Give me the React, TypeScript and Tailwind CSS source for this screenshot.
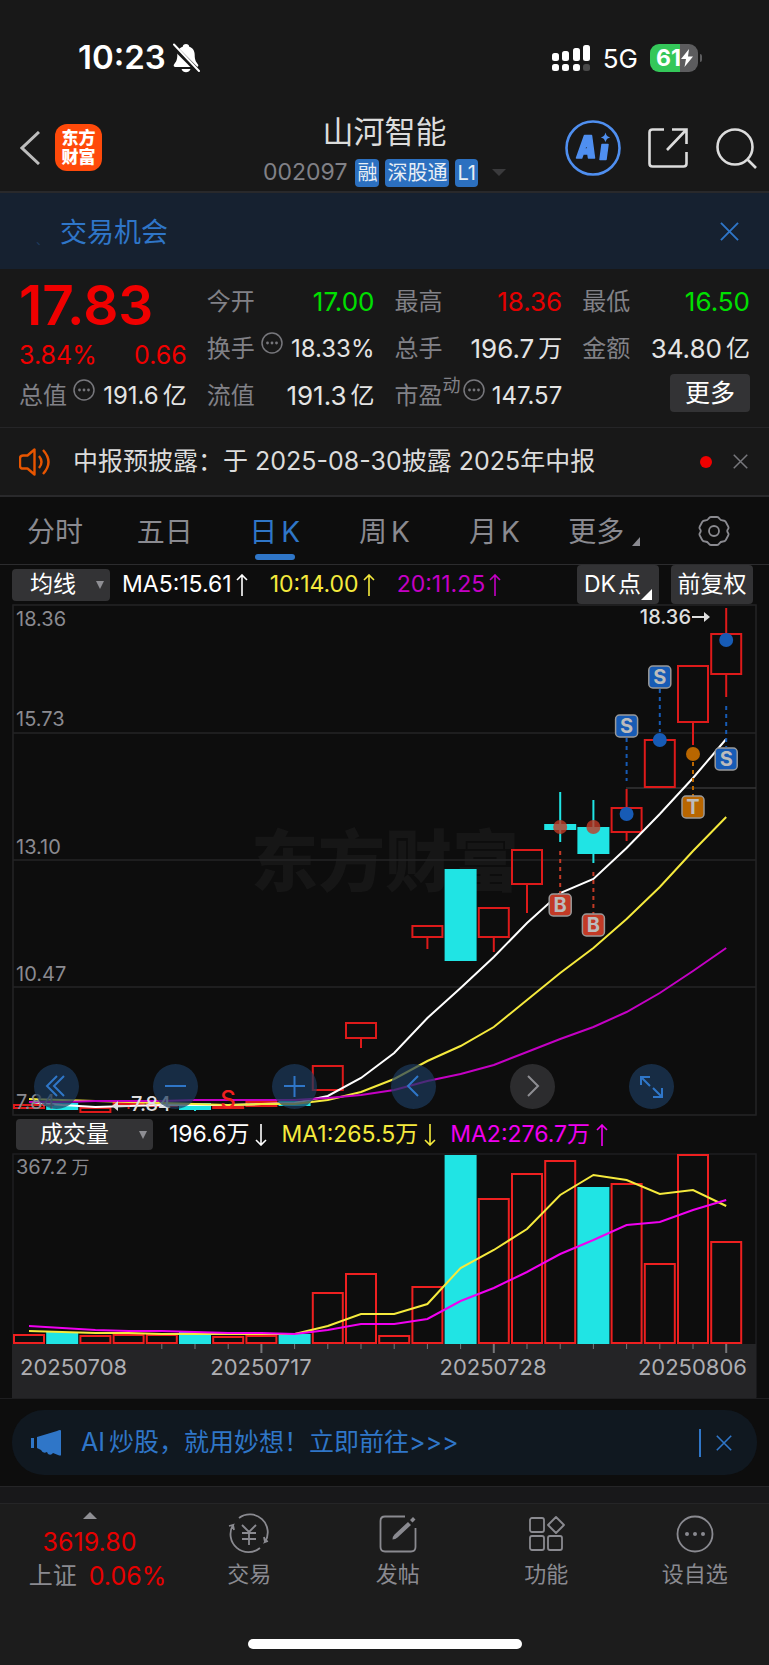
import React from "react";

const START_X = 17;
const STEP = 33.2;

const xAt = (i: number) => START_X + STEP * i;

// y holds high, top, bottom and low in chart units, measured down from the top edge
type Candle = { up: boolean; y: [number, number, number, number] };

const candles: Candle[] = [
  { up: true, y: [501, 501, 504, 504] },
  { up: false, y: [499, 500, 505, 506] },
  { up: true, y: [504, 504, 508, 508] },
  { up: true, y: [498, 499, 501, 505] },
  { up: true, y: [500, 500, 502, 502] },
  { up: false, y: [499, 500, 505, 507] },
  { up: true, y: [503, 503, 504, 504] },
  { up: true, y: [498, 498, 502, 502] },
  { up: false, y: [498, 498, 501, 501] },
  { up: true, y: [462, 462, 486, 487] },
  { up: true, y: [419, 419, 434, 444] },
  { up: true, y: [372, 372, 372, 372] },
  { up: true, y: [322, 322, 333, 345] },
  { up: false, y: [265, 266, 356, 357] },
  { up: true, y: [304, 304, 333, 348] },
  { up: true, y: [246, 246, 280, 309] },
  { up: false, y: [188, 221, 225, 238] },
  { up: false, y: [196, 224, 249, 259] },
  { up: true, y: [185, 204, 228, 237] },
  { up: true, y: [136, 136, 183, 183] },
  { up: true, y: [62, 62, 118, 141] },
  { up: true, y: [4, 30, 70, 93] },
];

const ma5 = [498, 501, 503, 502, 501, 501, 501, 500, 499, 492, 474, 449, 414, 384, 353, 319, 289, 275, 244, 210, 174, 135];
const ma10 = [495, 496, 497, 498, 499, 500, 501, 500, 500, 496, 488, 475, 457, 442, 423, 396, 369, 344, 315, 283, 247, 213];
const ma20 = [498, 498, 497, 497, 497, 496, 496, 496, 496, 494, 491, 486, 477, 470, 461, 448, 435, 423, 408, 389, 367, 344];

const volumeTops = [182, 180, 183, 182, 182, 180, 184, 183, 182, 140, 121, 183, 134, 3, 46, 21, 8, 35, 31, 111, 2, 89];
const volumeMa1 = [178, 179, 180, 180, 181, 181, 181, 181, 181, 173, 161, 161, 151, 115, 97, 76, 42, 22, 27, 41, 37, 53];
const volumeMa2 = [173, 175, 177, 178, 178, 179, 180, 180, 181, 177, 171, 171, 166, 148, 135, 119, 101, 87, 72, 69, 57, 47];
const fallingVolume = [1, 5, 8, 13, 17];

type Marker = { index: number; label: string; color: string; badge: number; dot: number; dash: [number, number] };

const markers: Marker[] = [
  { index: 16, label: "B", color: "#c23a26", badge: 301, dot: 223, dash: [247, 290] },
  { index: 17, label: "B", color: "#c23a26", badge: 321, dot: 223, dash: [268, 310] },
  { index: 18, label: "S", color: "#175bb5", badge: 122, dot: 210, dash: [134, 177] },
  { index: 19, label: "S", color: "#175bb5", badge: 73, dot: 136, dash: [85, 128] },
  { index: 20, label: "T", color: "#b96600", badge: 203, dot: 150, dash: [150, 192] },
  { index: 21, label: "S", color: "#175bb5", badge: 155, dot: 36, dash: [102, 143] },
];

const toPoints = (values: number[]) => values.map((y, i) => `${xAt(i)},${y}`).join(" ");

const Dots: React.FC = () => (
  <svg viewBox="0 0 22 22" className="h-[22px] w-[22px] shrink-0" fill="none" stroke="#77777c" strokeWidth="1.5" aria-hidden="true">
    <circle cx="11" cy="11" r="10" />
    <g fill="#77777c" stroke="none">
      <circle cx="6.5" cy="11" r="1.4" />
      <circle cx="11" cy="11" r="1.4" />
      <circle cx="15.5" cy="11" r="1.4" />
    </g>
  </svg>
);

const Cross: React.FC<{ className: string }> = ({ className }) => (
  <svg viewBox="0 0 20 20" className={className} fill="none" stroke="currentColor" strokeWidth="2" aria-hidden="true">
    <path d="M1 1 19 19M19 1 1 19" />
  </svg>
);

const StatusBar: React.FC = () => (
  <div className="flex h-[116px] items-center justify-between pr-[67px] pl-[78px]">
    <div className="flex items-center gap-1.5 text-[33px] font-semibold text-white">
      <span>10:23</span>
      <svg viewBox="0 0 28 30" className="h-[30px] w-7" aria-hidden="true">
        <path d="M14 1c-2 0-3 1-3.300 2.800C7 5 5.300 8 5.300 12c0 5-1.300 7-3.300 9.400-.8 1 0 2.600 1.300 2.600h21.400c1.300 0 2.100-1.600 1.300-2.600-2-2.400-3.300-4.400-3.300-9.400 0-4-1.700-7-5.400-8.200C17 2 16 1 14 1Z" fill="#fff" />
        <path d="M9.500 26h9c-.8 2.400-2.500 3.300-4.500 3.300S10.300 28.400 9.500 26Z" fill="#fff" />
        <path d="m1 3 26 26" stroke="#181818" strokeWidth="5" />
        <path d="m2 1.500 25 26.500" stroke="#fff" strokeWidth="2" strokeLinecap="round" />
      </svg>
    </div>
    <div className="flex items-center">
      <svg viewBox="0 0 40 28" className="h-7 w-10" fill="#fff" aria-hidden="true">
        <rect x="1" y="9" width="7" height="8" rx="2.500" />
        <rect x="11" y="7" width="7" height="10" rx="2.500" />
        <rect x="22" y="4" width="7" height="13" rx="2.500" />
        <rect x="32" y="1" width="7" height="16" rx="2.500" />
        <rect x="1" y="20" width="7" height="7" rx="2.500" />
        <rect x="11" y="20" width="7" height="7" rx="2.500" />
        <rect x="22" y="20" width="7" height="7" rx="2.500" />
        <rect x="32" y="20" width="7" height="7" rx="2.500" fill="#4a4a4a" />
      </svg>
      <span className="ml-3 text-[26px] text-white">5G</span>
      <div className="ml-3 flex h-7 w-12 items-center rounded-[9px] bg-[linear-gradient(to_right,#34c759_62%,#5c5c5e_62%)] pl-1.5 text-[23px] font-bold text-white">
        61
        <svg viewBox="0 0 12 18" className="h-[18px] w-3" fill="#fff" aria-hidden="true">
          <path d="M8 0 0 10h5L3.500 18 12 7.500H7Z" />
        </svg>
      </div>
      <div className="ml-0.5 h-2 w-0.5 rounded-r-full bg-[#5c5c5e]" />
    </div>
  </div>
);

const Header: React.FC = () => (
  <header className="grid h-[77px] grid-cols-[1fr_auto_1fr] items-center border-b-2 border-[#29292b]">
    <div className="flex items-center gap-[15px] pb-3 pl-5">
      <button aria-label="返回" className="text-[#bcbcbc]">
        <svg viewBox="0 0 20 34" className="h-[34px] w-5" fill="none" stroke="currentColor" strokeWidth="3">
          <path d="M19 1 2 17l17 16" />
        </svg>
      </button>
      <div className="flex h-[47px] w-[47px] items-center justify-center rounded-xl bg-[#ff4a0a] text-center text-[17px] leading-[19px] font-black text-white">
        东方<br />财富
      </div>
    </div>
    <div className="flex flex-col items-center">
      <h1 className="mb-2 text-[31px] leading-[30px] text-[#dcdcdc]">山河智能</h1>
      <div className="flex h-[36px] items-center gap-1.5 text-[23px]">
        <span className="text-[#818187]">002097</span>
        <span className="ml-0.5 rounded bg-[#2c70c0] px-0.5 text-[20px] leading-7 text-[#e8eef5]">融</span>
        <span className="rounded bg-[#2c70c0] px-0.5 text-[20px] leading-7 text-[#e8eef5]">深股通</span>
        <span className="rounded bg-[#2c70c0] px-0.5 text-[20px] leading-7 text-[#e8eef5]">L1</span>
        <button aria-label="切换" className="ml-2">
          <svg viewBox="0 0 14 7" className="h-[7px] w-3.5" fill="#3a3a3c"><path d="M0 0h14L7 7Z" /></svg>
        </button>
      </div>
    </div>
    <div className="flex items-center justify-end gap-[26px] pr-3 pb-3">
      <button aria-label="AI">
        <svg viewBox="0 0 56 56" className="h-14 w-14">
          <circle cx="28" cy="28" r="26.500" fill="none" stroke="#4f8ff0" strokeWidth="2.600" />
          <g fill="#4f8ff0" stroke="#4f8ff0" strokeWidth="1.500" strokeLinejoin="round">
            <path d="M11.500 38 19.500 15.500h7l3 22.500h-6l-.6-4h-4.800l-1.400 4Zm8-9h3l-.6-5.500Z" fillRule="evenodd" />
            <path d="M37 24.500h6l-2 15h-6Z" />
          </g>
          <path d="M40.500 12.500c.9 3.200 1.700 4 4.700 4.900-3 .9-3.800 1.700-4.700 4.900-.9-3.200-1.700-4-4.700-4.900 3-.9 3.800-1.700 4.700-4.900Z" fill="#4f8ff0" />
        </svg>
      </button>
      <button aria-label="分享" className="text-[#dcdcdc]">
        <svg viewBox="0 0 42 42" className="h-[42px] w-[42px]" fill="none" stroke="currentColor" strokeWidth="2.600">
          <path d="M17 2.500H5.500q-3 0-3 3v31q0 3 3 3h31q3 0 3-3V25M25 2.500h14.500V17M39.500 2.500 20 23" />
        </svg>
      </button>
      <button aria-label="搜索" className="text-[#dcdcdc]">
        <svg viewBox="0 0 42 42" className="h-[42px] w-[42px]" fill="none" stroke="currentColor" strokeWidth="2.600">
          <circle cx="20" cy="20" r="17.500" />
          <path d="m32 32 9 9" />
        </svg>
      </button>
    </div>
  </header>
);

type StatProps = { label: string; value: string; unit?: string; color?: string; info?: boolean; sup?: string };

const Stat: React.FC<StatProps> = ({ label, value, unit, color = "text-[#e4e4e4]", info, sup }) => (
  <div className="flex h-[47px] items-center justify-between">
    <dt className="flex items-center text-2xl whitespace-nowrap text-[#818187]">
      {label}
      {sup && <sup className="top-[-10px] text-[18px]">{sup}</sup>}
      {info && <span className={sup ? "-mt-3 ml-0.5" : "-mt-3 ml-1.5"}><Dots /></span>}
    </dt>
    <dd className={`flex items-center gap-1 whitespace-nowrap ${color} ${info ? "text-2xl" : "text-[26px]"}`}>
      {value}
      {unit && <span className="text-2xl">{unit}</span>}
    </dd>
  </div>
);

const Quote: React.FC = () => (
  <section className="border-b border-[#252527] px-[19px] pt-[9px] pb-2">
    <dl className="grid grid-cols-4 gap-x-5">
      <div className="row-span-2 flex flex-col text-[#f00000]">
        <dd className="text-[55px] leading-[54px] font-semibold">17.83</dd>
        <dd className="flex h-[40px] items-end justify-between text-[25px] leading-[34px]">
          <span>3.84%</span>
          <span>0.66</span>
        </dd>
      </div>
      <Stat label="今开" value="17.00" color="text-[#00e000]" />
      <Stat label="最高" value="18.36" color="text-[#e60000]" />
      <Stat label="最低" value="16.50" color="text-[#00e000]" />
      <Stat label="换手" value="18.33%" info />
      <Stat label="总手" value="196.7" unit="万" />
      <Stat label="金额" value="34.80" unit="亿" />
      <Stat label="总值" value="191.6" unit="亿" info />
      <Stat label="流值" value="191.3" unit="亿" />
      <Stat label="市盈" value="147.57" sup="动" info />
      <div className="flex items-start justify-end pt-0.5">
        <button className="h-[38px] w-20 rounded bg-[#333335] text-[25px] leading-[38px] text-white">更多</button>
      </div>
    </dl>
  </section>
);

const News: React.FC = () => (
  <section className="flex h-[69px] items-center border-b-2 border-[#29292b] pr-[21px] pl-[19px]">
    <svg viewBox="0 0 34 28" className="h-7 w-[34px]" fill="none" stroke="#e85500" strokeWidth="2.400" aria-hidden="true">
      <path d="M15.500 1.500v25l-7-6H4q-3 0-3-3v-7q0-3 3-3h4.500Z" strokeLinejoin="round" />
      <path d="M20 8q5 6 0 12M24 2q11 12 0 24" />
    </svg>
    <a href="#news" className="ml-5 flex-1 text-[25px] whitespace-nowrap text-[#dcdcdc]">中报预披露：于 2025-08-30披露 2025年中报</a>
    <span className="h-3 w-3 rounded-full bg-[#f00000]" />
    <button aria-label="关闭" className="ml-[21px] text-[#77777c]"><Cross className="h-[15px] w-[15px]" /></button>
  </section>
);

const tabs = [
  { name: "分时" },
  { name: "五日" },
  { name: "日", suffix: "K", active: true },
  { name: "周", suffix: "K" },
  { name: "月", suffix: "K" },
];

const Tabs: React.FC = () => (
  <nav className="grid h-[68px] grid-cols-7 border-b border-[#2c2c2e] bg-[#0d0d0d] text-[28px] text-[#8a8a90]">
    {tabs.map(({ name, suffix, active }) => (
      <button key={name} className={`relative flex items-center justify-center gap-1 pt-0.5 ${active ? "text-[#2f76c8]" : ""}`}>
        {name}
        {suffix && <span>{suffix}</span>}
        {active && <span className="absolute bottom-1 left-1/2 h-1.5 w-10 -translate-x-1/2 rounded-full bg-[#2f76c8]" />}
      </button>
    ))}
    <button className="flex items-center justify-center gap-2 pt-0.5">
      更多
      <svg viewBox="0 0 8 9" className="mt-5 h-[9px] w-2" fill="#8a8a90" aria-hidden="true"><path d="M8 0v9H0Z" /></svg>
    </button>
    <button aria-label="设置" className="flex items-center justify-center">
      <svg viewBox="0 0 32 32" className="h-8 w-8" fill="none" stroke="currentColor" strokeWidth="1.800">
        <path
          d="M13 2h6q1.500 0 2.300 1.500Q22.500 5.500 25 5.500q2 0 2.800 1.500l2.400 4.500q.8 1.500-.2 2.700-1.500 1.800 0 3.600 1 1.200.2 2.700L27.800 25q-.8 1.500-2.800 1.500-2.500 0-3.700 2Q20.500 30 19 30h-6q-1.500 0-2.300-1.500-1.200-2-3.700-2-2 0-2.800-1.500l-2.400-4.500q-.8-1.500.2-2.700 1.500-1.800 0-3.600-1-1.200-.2-2.700L4.200 7Q5 5.500 7 5.500q2.500 0 3.700-2Q11.500 2 13 2Z"
          strokeLinejoin="round"
        />
        <circle cx="16" cy="16" r="5" />
      </svg>
    </button>
  </nav>
);

const Caret: React.FC = () => (
  <svg viewBox="0 0 8 8" className="h-2 w-2" fill="#8e8e93" aria-hidden="true"><path d="M0 0h8L4 8Z" /></svg>
);

const Arrow: React.FC<{ down?: boolean }> = ({ down }) => (
  <svg viewBox="0 0 12 22" className={down ? "h-[22px] w-3 rotate-180" : "h-[22px] w-3"} fill="none" stroke="currentColor" strokeWidth="1.600" aria-hidden="true">
    <path d="M6 22V1M1 6l5-5 5 5" />
  </svg>
);

const PriceChart: React.FC = () => (
  <div className="relative">
    <svg viewBox="0 0 745 512" className="block w-full" aria-label="日K线图">
      <text x="373" y="282" textAnchor="middle" fontSize="67" fontWeight="900" fill="#161616">东方财富</text>
      <g fill="none" stroke="#242426" strokeWidth="1.500">
        <rect x="1" y="1" width="743" height="510" />
        <path d="M1 129h743M1 256h743M1 383h743" />
        <path d="M614 184h130" stroke="#343436" />
      </g>
      <g fill="#8a8a90" fontSize="20">
        <text x="4" y="22">18.36</text>
        <text x="4" y="122">15.73</text>
        <text x="4" y="250">13.10</text>
        <text x="4" y="377">10.47</text>
      </g>
      {candles.map(({ up, y: [high, top, bottom, low] }, i) => {
        const color = up ? "#dd1a1a" : "#20e4e4";
        return (
          <g key={i} stroke={color} strokeWidth="2" fill={up ? "none" : color}>
            <path d={`M${xAt(i)} ${high}V${top}M${xAt(i)} ${bottom}V${low}`} />
            <rect x={xAt(i) - 15} y={top} width="30" height={bottom - top} />
          </g>
        );
      })}
      <g fill="none" strokeWidth="2">
        <polyline points={toPoints(ma5)} stroke="#ffffff" />
        <polyline points={toPoints(ma10)} stroke="#f5ea3d" />
        <polyline points={toPoints(ma20)} stroke="#c400c4" />
      </g>
      {markers.map(({ index, label, color, badge, dot, dash }) => (
        <g key={index}>
          <path d={`M${xAt(index)} ${dash[0]}V${dash[1]}`} stroke={color} strokeWidth="2" strokeDasharray="4 4" />
          <circle cx={xAt(index)} cy={dot} r="7" fill={color} fillOpacity={label === "B" ? 0.8 : 1} />
          <rect x={xAt(index) - 11} y={badge - 11} width="22" height="22" rx="4" fill={color} stroke="#999999" strokeWidth="1.500" />
          <text x={xAt(index)} y={badge + 7} textAnchor="middle" fontSize="20" fontWeight="700" fill="#bcbcbc">{label}</text>
        </g>
      ))}
      <text x="4" y="505" fill="#8a8a90" fontSize="20">7.84</text>
      <g fill="#dedede" fontSize="20" fontWeight="500">
        <text x="679" y="20" textAnchor="end">18.36</text>
        <path d="M680 13h12" stroke="#dedede" strokeWidth="2" />
        <path d="m692 8 6 5-6 5Z" />
        <text x="119" y="507">7.84</text>
        <path d="M104 502h14" stroke="#dedede" strokeWidth="2" />
        <path d="m106 497-6 5 6 5Z" />
      </g>
      <text x="216" y="504" textAnchor="middle" fontSize="24" fontWeight="500" fill="#f02020">S</text>
    </svg>
    <div className="absolute bottom-[7px] left-[22px] flex gap-[74px] text-[#2f76c8]">
      <button aria-label="最早" className="h-[45px] w-[45px] rounded-full bg-[#1c3a5c]/70">
        <svg viewBox="0 0 45 45" fill="none" stroke="currentColor" strokeWidth="2"><path d="M23 12 13 22l10 10M30 12 20 22l10 10" /></svg>
      </button>
      <button aria-label="缩小" className="h-[45px] w-[45px] rounded-full bg-[#1c3a5c]/70">
        <svg viewBox="0 0 45 45" fill="none" stroke="currentColor" strokeWidth="2"><path d="M12 22h21" /></svg>
      </button>
      <button aria-label="放大" className="h-[45px] w-[45px] rounded-full bg-[#1c3a5c]/70">
        <svg viewBox="0 0 45 45" fill="none" stroke="currentColor" strokeWidth="2"><path d="M12 22h21M22.500 12v21" /></svg>
      </button>
      <button aria-label="左移" className="h-[45px] w-[45px] rounded-full bg-[#1c3a5c]/70">
        <svg viewBox="0 0 45 45" fill="none" stroke="currentColor" strokeWidth="2"><path d="m27 12-10 10 10 10" /></svg>
      </button>
      <button aria-label="右移" className="h-[45px] w-[45px] rounded-full bg-[#2c2c2e] text-[#8e8e93]">
        <svg viewBox="0 0 45 45" fill="none" stroke="currentColor" strokeWidth="2"><path d="m18 12 10 10-10 10" /></svg>
      </button>
      <button aria-label="全屏" className="h-[45px] w-[45px] rounded-full bg-[#1c3a5c]/70">
        <svg viewBox="0 0 45 45" fill="none" stroke="currentColor" strokeWidth="2"><path d="M12 21v-8h9M12 13l9 9M33 24v9h-9M33 33l-9-9" /></svg>
      </button>
    </div>
  </div>
);

const VolumeChart: React.FC = () => (
  <svg viewBox="0 0 745 245" className="block w-full" aria-label="成交量图">
    <rect x="1" y="1" width="743" height="243" fill="none" stroke="#1e1e20" strokeWidth="1.500" />
    <rect x="0" y="191" width="744" height="54" fill="#242426" />
    <text x="4" y="21" fill="#8a8a90" fontSize="20">
      367.2<tspan dx="4" fontSize="18">万</tspan>
    </text>
    {volumeTops.map((top, i) => {
      const falling = fallingVolume.includes(i);
      return (
        <g key={i}>
          <rect
            x={xAt(i) - 15}
            y={top}
            width="30"
            height={190 - top}
            strokeWidth="2"
            stroke={falling ? "#20e4e4" : "#ee2020"}
            fill={falling ? "#20e4e4" : "none"}
          />
          {i > 3 && <path d={`M${xAt(i)} 191v${i % 7 === 0 ? 9 : 5}`} stroke="#77777a" strokeWidth={i % 7 === 0 ? 2 : 1} />}
        </g>
      );
    })}
    <g fill="none" strokeWidth="2">
      <polyline points={toPoints(volumeMa1)} stroke="#f5ea3d" />
      <polyline points={toPoints(volumeMa2)} stroke="#f000f0" />
    </g>
    <g fill="#aeaeb2" fontSize="22">
      <text x="8" y="222">20250708</text>
      <text x="249" y="222" textAnchor="middle">20250717</text>
      <text x="481" y="222" textAnchor="middle">20250728</text>
      <text x="735" y="222" textAnchor="end">20250806</text>
    </g>
  </svg>
);

const ChartPanel: React.FC = () => (
  <section className="border-b border-[#1e1e20] bg-[#0d0d0d] px-3">
    <div className="flex h-[39px] items-center text-[23px] whitespace-nowrap">
      <button className="flex h-8 w-[98px] items-center justify-between rounded bg-[#333335] pr-1.5 pl-[18px] text-white">
        均线 <Caret />
      </button>
      <span className="ml-3 flex items-center gap-1 text-white">MA5:15.61 <Arrow /></span>
      <span className="ml-[22px] flex items-center gap-1 text-[#f5ea3d]">10:14.00 <Arrow /></span>
      <span className="ml-[22px] flex items-center gap-1 text-[#c400c4]">20:11.25 <Arrow /></span>
      <button className="ml-auto flex h-full w-[82px] items-center justify-center rounded bg-[#333335] text-white">
        DK<span className="ml-0.5">点</span>
        <svg viewBox="0 0 11 11" className="mb-1 h-[11px] w-[11px] self-end" fill="#fff" aria-hidden="true"><path d="M11 0v11H0Z" /></svg>
      </button>
      <button className="mr-1 ml-3 h-full w-[82px] rounded bg-[#333335] text-white">前复权</button>
    </div>
    <PriceChart />
    <div className="flex h-[37px] items-center pl-1 text-[23px] whitespace-nowrap">
      <button className="flex h-[31px] w-[137px] items-center justify-between rounded bg-[#333335] pr-1.5 pl-6 text-white">
        成交量 <Caret />
      </button>
      <span className="ml-4 flex items-center gap-1.5 text-white">196.6万 <Arrow down /></span>
      <span className="ml-3.5 flex items-center gap-1.5 text-[#f5ea3d]">MA1:265.5万 <Arrow down /></span>
      <span className="ml-3.5 flex items-center gap-1.5 text-[#f000f0]">MA2:276.7万 <Arrow /></span>
    </div>
    <VolumeChart />
  </section>
);

const Promo: React.FC = () => (
  <section className="bg-[#0d0d0d] px-3 py-[11px]">
    <div className="flex h-[65px] items-center rounded-[32px] bg-[#101820] pr-[25px] pl-[19px] text-[#2f76c8]">
      <svg viewBox="0 0 31 26" className="h-[26px] w-[31px]" fill="currentColor" aria-hidden="true">
        <path d="M0 8h3v10H0ZM6 7 26 1q4-2 4 0v24q0 1-3 0l-5-2q-2 3-5 1l-1-2q-4 2-6-2l-4-2Z" />
      </svg>
      <a href="#ai" className="ml-[19px] flex flex-1 items-center gap-1 text-[25px] whitespace-nowrap">
        <span>AI</span>
        <span>炒股，就用妙想！立即前往&gt;&gt;&gt;</span>
      </a>
      <span className="h-7 w-0.5 bg-[#2f76c8]" />
      <button aria-label="关闭" className="ml-[15px]"><Cross className="h-4 w-4" /></button>
    </div>
  </section>
);

const actions = [
  {
    label: "交易",
    icon: <path d="M11 5a18 18 0 0 1 26 24l3-1M36 24l1 5M32 35A18 18 0 0 1 5 12l-4 1M5 12l1 5M14 12l7 7 7-7M14 20h14M14 26h14M21 19v13" />,
  },
  {
    label: "发帖",
    icon: (
      <>
        <path d="M28 3.500H8q-4.500 0-4.500 4.500v26q0 4.500 4.500 4.500h26q4.500 0 4.500-4.500V15" />
        <path d="M15.500 26.500q0-3 2-5L31 9l3 3-13.500 12.500q-2 2-5 2ZM33 7l3-3 2.500 2.500-3 3Z" fill="currentColor" stroke="none" />
      </>
    ),
  },
  {
    label: "功能",
    icon: (
      <>
        <rect x="5" y="5" width="14" height="14" rx="2" />
        <rect x="5" y="23" width="14" height="14" rx="2" />
        <rect x="23" y="23" width="14" height="14" rx="2" />
        <path d="m31 4 8 8-8 8-8-8Z" strokeLinejoin="round" />
      </>
    ),
  },
  {
    label: "设自选",
    icon: (
      <>
        <circle cx="21" cy="21" r="17.500" />
        <g fill="currentColor" stroke="none">
          <circle cx="13" cy="21" r="2" />
          <circle cx="21" cy="21" r="2" />
          <circle cx="29" cy="21" r="2" />
        </g>
      </>
    ),
  },
];

const BottomBar: React.FC = () => (
  <footer className="border-t border-[#252527] bg-[#1c1c1c]">
    <div className="grid h-[115px] grid-cols-[175px_repeat(4,1fr)] pt-1">
      <button className="flex flex-col items-center pl-1 text-[25px] text-[#e60000]">
        <svg viewBox="0 0 14 7" className="mt-1 h-[7px] w-3.5 shrink-0" fill="#8e8e93" aria-hidden="true"><path d="M7 0l7 7H0Z" /></svg>
        <span className="mt-1.5 leading-[34px]">3619.80</span>
        <span className="flex gap-3 pl-4 leading-[34px]"><span className="text-2xl leading-[34px] text-[#8a8a90]">上证</span>0.06%</span>
      </button>
      {actions.map(({ label, icon }) => (
        <button key={label} className="flex flex-col items-center text-[22px] text-[#8a8a90]">
          <svg viewBox="0 0 42 42" className="mt-[5px] h-[42px] w-[42px] shrink-0" fill="none" stroke="currentColor" strokeWidth="1.800" aria-hidden="true">
            {icon}
          </svg>
          <span className="mt-0.5 leading-[34px]">{label}</span>
        </button>
      ))}
    </div>
    <div className="flex justify-center pt-5 pb-4">
      <div className="h-2.5 w-[274px] rounded-full bg-white" />
    </div>
  </footer>
);

const App: React.FC = () => (
  <main className="min-h-screen bg-[#181818] font-[Inter,'Noto_Sans_CJK_SC',sans-serif]">
    <StatusBar />
    <Header />
    <section className="flex h-[76px] items-center justify-between bg-[#162130] pr-[30px] pl-9 text-[#2f76c8]">
      <p className="flex items-center pt-1 text-[27px]">
        <span className="mt-3 mr-5 h-2 w-1 text-[12px] leading-3 opacity-30">、</span>
        交易机会
      </p>
      <button aria-label="关闭"><Cross className="h-[19px] w-[19px]" /></button>
    </section>
    <Quote />
    <News />
    <Tabs />
    <ChartPanel />
    <Promo />
    <div className="h-[17px] border-t border-[#252527] bg-[#18181a]" />
    <BottomBar />
  </main>
);

export default App;
